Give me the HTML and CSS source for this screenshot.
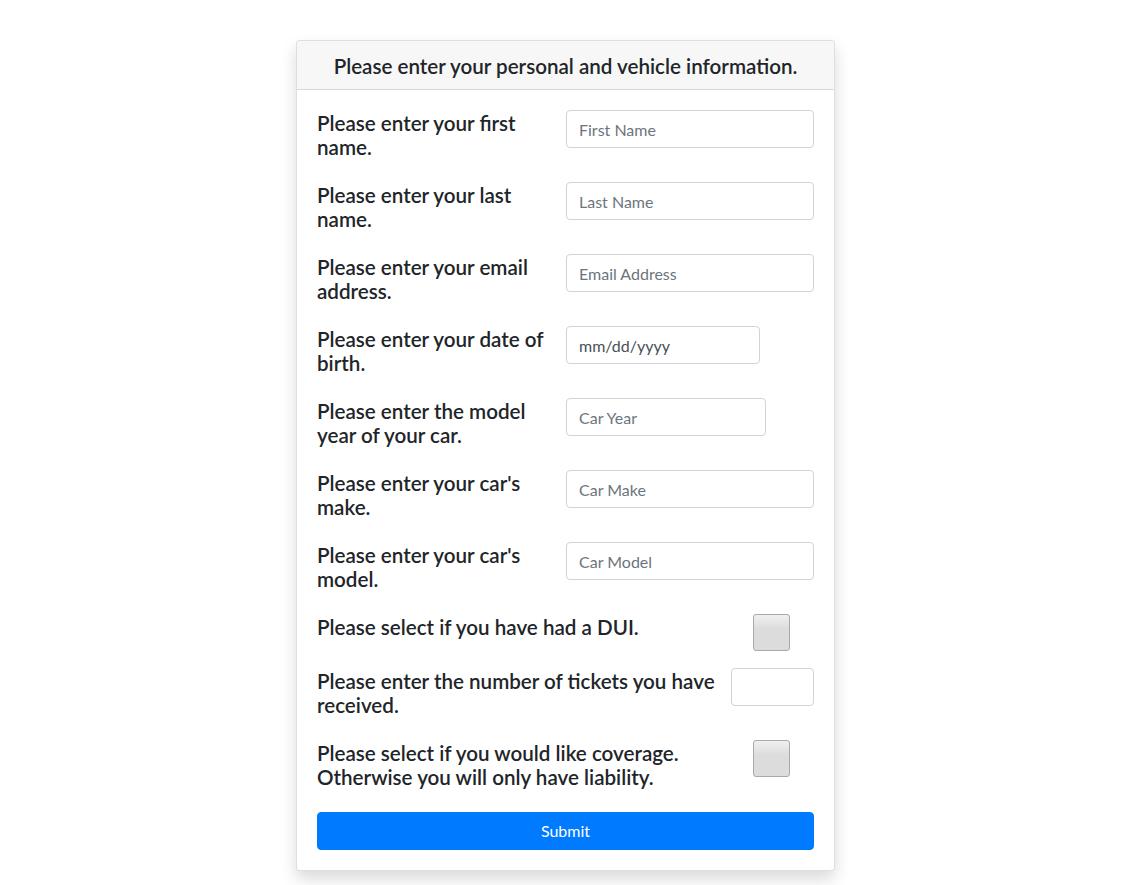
FILE: index.html
```html
<!DOCTYPE html>
<html>
<head>
<meta charset="utf-8">
<link rel="stylesheet" href="styles.css">
</head>
<body>
<div class="page">
  <form class="card">
    <div class="card-header"><h5 class="title">Please enter your personal and vehicle information.</h5></div>
    <div class="card-body">
      <div class="group split">
        <h5 class="label">Please enter your first name.</h5>
        <div class="field"><input class="control" type="text" placeholder="First Name"></div>
      </div>
      <div class="group split">
        <h5 class="label">Please enter your last name.</h5>
        <div class="field"><input class="control" type="text" placeholder="Last Name"></div>
      </div>
      <div class="group split">
        <h5 class="label">Please enter your email address.</h5>
        <div class="field"><input class="control" type="text" placeholder="Email Address"></div>
      </div>
      <div class="group split">
        <h5 class="label">Please enter your date of birth.</h5>
        <div class="field"><input class="control date" type="text" placeholder="mm/dd/yyyy"></div>
      </div>
      <div class="group split">
        <h5 class="label">Please enter the model year of your car.</h5>
        <div class="field"><input class="control year" type="text" placeholder="Car Year"></div>
      </div>
      <div class="group split">
        <h5 class="label">Please enter your car's make.</h5>
        <div class="field"><input class="control" type="text" placeholder="Car Make"></div>
      </div>
      <div class="group split">
        <h5 class="label">Please enter your car's model.</h5>
        <div class="field"><input class="control" type="text" placeholder="Car Model"></div>
      </div>
      <div class="group wide">
        <h5 class="label">Please select if you have had a DUI.</h5>
        <div class="side"><span class="check"></span></div>
      </div>
      <div class="group wide">
        <h5 class="label">Please enter the number of tickets you have received.</h5>
        <div class="side"><input class="control" type="text"></div>
      </div>
      <div class="group wide">
        <h5 class="label">Please select if you would like coverage. Otherwise you will only have liability.</h5>
        <div class="side"><span class="check"></span></div>
      </div>
      <button class="submit" type="button">Submit</button>
    </div>
  </form>
</div>
</body>
</html>
```

FILE: styles.css
```css
* { box-sizing: border-box; }
html, body { margin: 0; padding: 0; background: #fff; }
body {
  font-family: Lato, "Liberation Sans", sans-serif;
  font-size: 16px;
  line-height: 1.5;
  color: #212529;
}
.page { padding: 40px 0 40px 296px; }
.card {
  width: 539px;
  border: 1px solid rgba(0,0,0,.125);
  border-radius: 4px;
  background: #fff;
  box-shadow: 0 8px 16px rgba(0,0,0,.15);
}
.card-header {
  background: #f7f7f7;
  border-bottom: 1px solid rgba(0,0,0,.125);
  padding: 13px 20px 11px;
  border-radius: 4px 4px 0 0;
}
h5 { margin: 0; font-size: 20.6px; line-height: 24px; font-weight: 600; }
.title { text-align: center; }
.card-body { padding: 20px; }
.group { display: flex; margin-bottom: 16px; }
.label { padding-top: 1px; margin-bottom: 7px; }
.split .label { width: 249px; padding-right: 8px; }
.split .field { flex: 1; }
.wide .label { flex: 1; padding-right: 12px; }
.wide .side {
  width: 83px;
  min-height: 38px;
  display: flex;
  justify-content: center;
  align-items: flex-start;
}
.control {
  display: block;
  width: 100%;
  height: 38px;
  padding: 6px 12px;
  font-family: inherit;
  font-size: 16px;
  line-height: 24px;
  color: #495057;
  background: #fff;
  border: 1px solid #ced4da;
  border-radius: 4px;
  outline: none;
}
.control::placeholder { color: #6c757d; opacity: 1; }
.date { width: 194px; }
.date::placeholder { color: #495057; }
.year { width: 200px; }
.check {
  display: block;
  width: 37px;
  height: 37px;
  margin-right: 2px;
  border: 1px solid #a9a9a9;
  border-radius: 3px;
  background: linear-gradient(#f0f0f0, #dcdcdc 40%, #dcdcdc);
}
.submit {
  display: block;
  width: 100%;
  height: 38px;
  border: 1px solid #007bff;
  border-radius: 4px;
  background: #007bff;
  color: #fff;
  font-family: inherit;
  font-size: 16px;
  line-height: 24px;
  padding: 6px 12px;
}
```
